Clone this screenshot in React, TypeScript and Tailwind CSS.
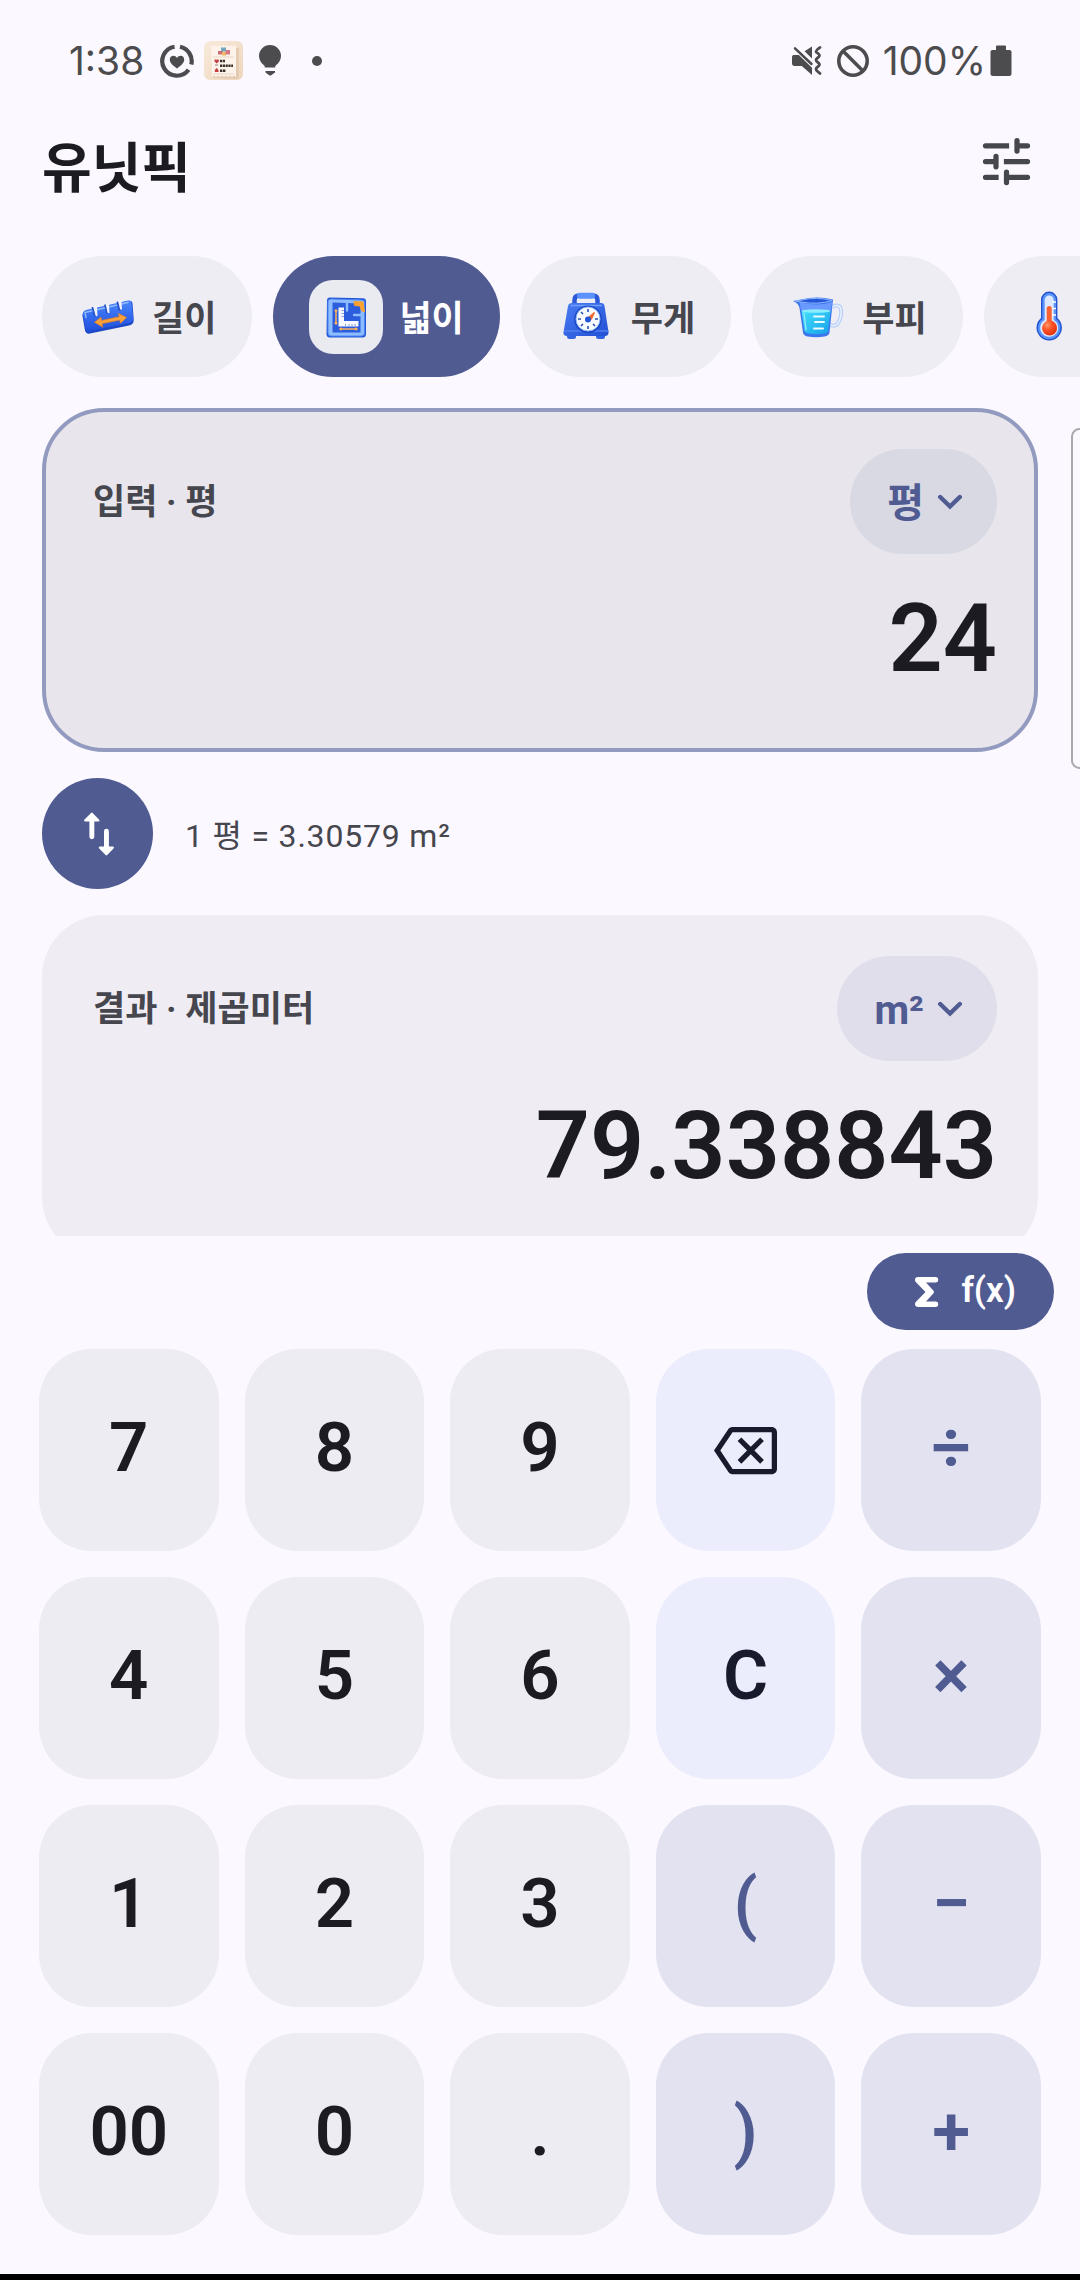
import { useState } from "react";
import type { ReactNode } from "react";
import { MdOutlineBackspace } from "react-icons/md";

function ActivityIcon() {
  return (
    <svg viewBox="0 0 34 34" className="size-[34px]" fill="none" stroke="currentColor" strokeWidth="4.2">
      <path d="M20 2.8A14.6 14.6 0 0 1 31.3 20.5" />
      <path d="M28.6 25.8A14.6 14.6 0 1 1 14.6 2.7" />
      <path
        d="M17 24.5C11.5 20.5 9.8 18.400 9.800 15.500c0-2.200 1.600-3.700 3.500-3.700 1.500 0 2.900.8 3.700 2.200.8-1.400 2.200-2.200 3.700-2.200 1.900 0 3.500 1.500 3.500 3.700 0 2.900-1.700 5-7.200 9z"
        fill="currentColor"
        stroke="none"
      />
    </svg>
  );
}

function ReceiptIcon() {
  return (
    <svg viewBox="0 0 40 40" className="size-10">
      <defs>
        <linearGradient id="receiptBack" x1="0" y1="0" x2="1" y2="1">
          <stop offset="0" stopColor="#f8eadb" />
          <stop offset="1" stopColor="#efd6bd" />
        </linearGradient>
      </defs>
      <rect width="39" height="39" rx="6" fill="url(#receiptBack)" />
      <path d="M9 6l26 1v31l-26-1z" fill="#dcbfa3" opacity=".6" />
      <path
        d="M7 4l2 1.500 2-1.500 2 1.500 2-1.500 2 1.500 2-1.500 2 1.500 2-1.500 2 1.500 2-1.500 2 1.500 3-1.500v32l-2-1.500-2 1.500-2-1.500-2 1.500-2-1.500-2 1.500-2-1.500-2 1.500-2-1.500-2 1.500-2-1.500-2 1.500z"
        fill="#fdf3ea"
      />
      <path d="M9 16h21M9 33h21" stroke="#e8d5c6" strokeWidth="1" />
      <rect x="17" y="6.500" width="5" height="4" fill="#72a7bd" />
      <rect x="14" y="10" width="5" height="3.500" fill="#ce6d78" />
      <rect x="18" y="11" width="4" height="3.500" fill="#f0bd62" />
      <rect x="21.500" y="9" width="4.500" height="4.500" fill="#d77887" />
      <path d="M10.500 18.500h1.800l.5.600.5-.6h1.500v2l-2 2-2.300-2zM12.700 27l1.800 2v2h-3.700v-2z" fill="#c63f42" />
      <path d="M11 24h3" stroke="#b9a8a0" strokeWidth="1.500" />
      <path d="M16 20h5M16 24.700h13M16 29.700h6" stroke="#3d302d" strokeWidth="2.400" strokeDasharray="2.200 .6" />
    </svg>
  );
}

function BulbIcon() {
  return (
    <svg viewBox="0 0 22 32" className="h-8 w-[22px]" fill="currentColor">
      <path d="M11 0a11 11 0 0 1 11 11c0 4-2.200 7-5 9.200-.7.600-.8 1-.8 2.300H5.800c0-1.300-.1-1.700-.8-2.300C2.200 18 0 15 0 11A11 11 0 0 1 11 0z" />
      <path d="M6.500 26h9.500v1.500L12.500 30a2 2 0 0 1-2.600 0l-3.400-2.500z" />
    </svg>
  );
}

function MuteVibrateIcon() {
  return (
    <svg viewBox="0 0 30 30" className="size-[30px]">
      <path
        d="M1.500 9h5.300L20 21.800V29L9.800 20H2.500C1 20 0 19 0 17.500v-6C0 10 .6 9 1.500 9zM12.600 5.200L20 .4v12z"
        fill="currentColor"
      />
      <path d="M3 2.300L19.500 18" stroke="currentColor" strokeWidth="2.500" strokeLinecap="round" />
      <path
        d="M28 1.500c-2 1.500-4 2.500-4 4s3.500 2 3.500 4-3.500 2.500-3.500 4.500 3.500 2.500 3.500 4.500-3.500 2.500-3.500 4.500 2 2.500 4 4.500"
        fill="none"
        stroke="currentColor"
        strokeWidth="2.800"
        strokeLinecap="round"
      />
    </svg>
  );
}

function BlockedIcon() {
  return (
    <svg viewBox="0 0 32 32" className="size-8" fill="none" stroke="currentColor" strokeWidth="3.600">
      <circle cx="16" cy="16" r="14.200" />
      <path d="M6 6l20 20" />
    </svg>
  );
}

function BatteryIcon() {
  return (
    <svg viewBox="0 0 22 32" className="h-8 w-[22px]" fill="currentColor">
      <path d="M7 .5h8q1 0 1 1V5h3.500Q21.500 5 21.500 7v21.500q0 2.500-2.500 2.500H3Q.5 31 .5 28.500V7Q.5 5 2.500 5H6V1.500q0-1 1-1z" />
    </svg>
  );
}

function TuneIcon() {
  return (
    <svg viewBox="0 0 24 24" className="size-[63px]" fill="currentColor">
      <path d="M4 5a1 1 0 0 0 0 2h9V5zM15 4a1 1 0 0 1 2 0v1h3a1 1 0 0 1 0 2h-3v1a1 1 0 0 1-2 0z" />
      <path d="M4 11a1 1 0 0 0 0 2h3v1a1 1 0 0 0 2 0v-4a1 1 0 0 0-2 0v1zM11 11h9a1 1 0 0 1 0 2h-9z" />
      <path d="M4 17a1 1 0 0 0 0 2h5v-2zM11 16a1 1 0 0 1 2 0v1h7a1 1 0 0 1 0 2h-7v1a1 1 0 0 1-2 0z" />
    </svg>
  );
}

function LengthIcon() {
  return (
    <svg viewBox="0 0 58 58" className="size-[58px]">
      <defs>
        <linearGradient id="rulerBlue" x1="0" y1="0" x2="0" y2="1">
          <stop offset="0" stopColor="#4b86ff" />
          <stop offset="1" stopColor="#1f4fdc" />
        </linearGradient>
      </defs>
      <path
        d="M8 23L50 13q4-1 4.500 2.500l1.200 16q.3 5-4.700 6L12 45.500q-4 .8-5-3L4.500 28q-.5-4 3.500-5z"
        fill="#1c49c6"
      />
      <path
        d="M8 22L50 12.500q3-.6 3.500 2.500l1.700 14.500q.3 4.500-4.200 5.500L12 43q-3.500.8-4.300-2.500L5 26.500q-.5-3.500 3-4.500z"
        fill="url(#rulerBlue)"
      />
      <path d="M7 24.500l43-10M7 24.500l1 5" fill="none" stroke="#8fb9ff" strokeWidth="1.500" strokeLinecap="round" />
      <path d="M14.500 19l2.500 9.500M27 16.500l2.500 9M39.500 13.500l2 9" stroke="#2450c8" strokeWidth="2" />
      <path
        d="M15 18l2.500 9.500q1.200 1.500 2 0l-.5-8 1-2.500zM27.500 15.500l2 9q1.200 1.500 2 0L31 17l1-2.500zM40 12.500l2 8.500q1.200 1.500 2 0l-.5-7.500 1-2.200z"
        fill="#f1f1fb"
      />
      <path
        d="M16.500 34.200l6.500-5 .5 3.200 17.700-3.700-.8-3.200 8.200 4-6.200 5.800-.7-3.200-17.700 3.600.8 3.500z"
        fill="#fba23a"
        stroke="#dd7d25"
        strokeWidth=".7"
        strokeLinejoin="round"
      />
    </svg>
  );
}

function AreaIcon() {
  return (
    <svg viewBox="0 0 58 58" className="size-[58px]">
      <path d="M13 9.500l33 .8q3 .2 3 3V46q0 3.500-3.500 3.500H13q-3.500 0-3.500-3.500l.5-33.500q0-3 3-3z" fill="#2456d6" />
      <path d="M14 11l31 1q2.500 0 2.500 2.500V45q0 3-3 3H14q-3 0-3-3V14q0-3 3-3z" fill="#8dbcff" stroke="#4c86f4" strokeWidth="1" />
      <path d="M15.500 14.500L43.500 15.500V44.500H15.500z" fill="#2b5ddd" />
      <path d="M30 15v7.500M44 27h-7" fill="none" stroke="#8dbcff" strokeWidth="2.400" strokeLinecap="round" />
      <path d="M37 13.500l9 .5 1.500 10-3-1.500-1.500-4.500-5.500-.5z" fill="#f9a22f" stroke="#f9a22f" strokeWidth="1" />
      <path d="M21.500 19.500h5.500v13.500h14.500v5.500h-20z" fill="#f7f8ff" />
      <path d="M24.500 22.500H27M24.500 25.500H27M24.500 28.500H27M28.500 36v2.500M32 36v2.500M35 36v2.500M38 36v2.500" stroke="#8aa4de" strokeWidth="1" />
      <path d="M19 22v14M17.800 23.500L19 22l1.200 1.500M17.800 34.500L19 36l1.200-1.500M23 41h17M24.500 39.700L23 41l1.500 1.300M38.500 39.700L40 41l-1.500 1.300" fill="none" stroke="#ffb35a" strokeWidth="1.500" />
    </svg>
  );
}

function WeightIcon() {
  return (
    <svg viewBox="0 0 58 58" className="size-[58px]">
      <defs>
        <linearGradient id="scaleBlue" x1="0" y1="0" x2="1" y2="1">
          <stop offset="0" stopColor="#4a7cf4" />
          <stop offset="1" stopColor="#2350d4" />
        </linearGradient>
      </defs>
      <path d="M17.500 17V12q0-4 4-4.500h15q4 .5 4 4.500v5" fill="none" stroke="#2c59d8" strokeWidth="4.500" />
      <rect x="20" y="4.800" width="18" height="6" rx="3" fill="#5b92ff" />
      <rect x="10" y="44" width="9" height="7" rx="2.500" fill="#3264df" />
      <rect x="39" y="44" width="9" height="7" rx="2.500" fill="#3264df" />
      <path d="M15 15h29q3 0 3.500 3l4 26q.2 4-3.500 4H10q-4 0-3.500-4l4.500-26q.7-3 4-3z" fill="url(#scaleBlue)" />
      <path d="M14 17.500h30.500" stroke="#6fa0ff" strokeWidth="1.500" strokeLinecap="round" />
      <path d="M7 43h44.500" stroke="#5080ef" strokeWidth="1.500" />
      <circle cx="31" cy="31.200" r="13.800" fill="#1c48c2" />
      <circle cx="31" cy="31" r="12" fill="#f8faff" stroke="#8db4ff" strokeWidth="1" />
      <path
        d="M31 21v3M31 38v3M21 31h3M38 31h3M24 24l2 2M36 36l2 2M24 38l2-2"
        stroke="#294fae"
        strokeWidth="1.600"
      />
      <path d="M31.500 29.500l6-5-3 6.500z" fill="#f36a2c" stroke="#f36a2c" strokeWidth="1.200" />
      <circle cx="31" cy="31.500" r="3" fill="#2254d5" />
    </svg>
  );
}

function VolumeIcon() {
  return (
    <svg viewBox="0 0 58 58" className="size-[58px]">
      <defs>
        <linearGradient id="cupWater" x1="0" y1="0" x2="1" y2="1">
          <stop offset="0" stopColor="#44e0ff" />
          <stop offset="1" stopColor="#159fe8" />
        </linearGradient>
      </defs>
      <path d="M44 19q8-4 9 3t-3 13q-2 4-8 2" fill="none" stroke="#b9d0fb" strokeWidth="4" />
      <path d="M44 19q8-4 9 3t-3 13q-2 4-8 2" fill="none" stroke="#e9f1ff" strokeWidth="1.500" />
      <path d="M5 13l8-1.500q16-4 32 0l-3.500 33q-.5 3-5 4-8 1.500-17 0-4-.8-4.500-4L11.500 20q-1-5-6.500-7z" fill="#3c76ed" />
      <path d="M11.500 14q17 5 32.500 0l-1 8.500H13z" fill="#6b9aff" />
      <path d="M13.500 23q15 2.500 29 0l-2.500 20q-.4 2-4 2.600-8 1.400-15.500 0-3.500-.7-4-2.600z" fill="url(#cupWater)" />
      <ellipse cx="28" cy="23" rx="14.500" ry="1.800" fill="#8beeff" />
      <path d="M7 13l7-1q14-3.500 30 .5-14 4.500-31 1.500z" fill="#2457d8" stroke="#8db6ff" strokeWidth="1" />
      <path d="M16 25l2 17" stroke="#8ceaff" strokeWidth="1.500" strokeLinecap="round" />
      <path d="M26 28.500h10M27 34h9M26 40.500h9" stroke="#e9fbff" strokeWidth="2" strokeLinecap="round" />
    </svg>
  );
}

function TemperatureIcon() {
  return (
    <svg viewBox="0 0 58 58" className="size-[58px]">
      <defs>
        <radialGradient id="thermoBulb" cx=".35" cy=".3" r=".8">
          <stop offset="0" stopColor="#ff9a6a" />
          <stop offset=".4" stopColor="#ff5426" />
          <stop offset="1" stopColor="#dd2c0c" />
        </radialGradient>
      </defs>
      <path d="M29.200 3.500a8.200 8.200 0 0 1 8.200 8.200V30a12.700 12.700 0 1 1-16.400 0V11.700a8.200 8.200 0 0 1 8.200-8.200z" fill="#2353cf" />
      <path d="M29.200 5a6.800 6.800 0 0 1 6.800 6.800V31a11.200 11.200 0 1 1-13.600 0V11.800A6.800 6.800 0 0 1 29.200 5z" fill="#5a93fb" />
      <path d="M29.200 7.500a4.500 4.500 0 0 1 4.500 4.500v20a9 9 0 1 1-9 0V12a4.500 4.500 0 0 1 4.500-4.500z" fill="#dce8ff" />
      <rect x="26.700" y="18" width="5" height="20" rx="2.500" fill="#f9602f" />
      <circle cx="29.600" cy="40" r="7.500" fill="url(#thermoBulb)" />
      <path d="M32 14h4M32 20.500h4M32 27h4" stroke="#fff" strokeWidth="1.600" />
    </svg>
  );
}

function SwapIcon() {
  return (
    <svg viewBox="0 0 32 44" className="h-11 w-8" fill="currentColor">
      <path d="M9 1q.8-.8 1.600 0l6.400 6.600q1.300 1.900-.8 1.900h-3.900v15.300a2.400 2.400 0 0 1-4.900 0V9.500H3.300q-2 0-.8-1.900z" />
      <path d="M23.600 43q.8.8 1.600 0l6.300-6.600q1.300-1.900-.8-1.900h-3.800V19.200a2.400 2.400 0 0 0-4.900 0v15.300h-4q-2 0-.8 1.900z" />
    </svg>
  );
}

function ChevronIcon() {
  return (
    <svg
      viewBox="0 0 26 16"
      className="pointer-events-none absolute right-[34px] top-[45px] h-4 w-[26px]"
      fill="none"
      stroke="currentColor"
      strokeWidth="4.400"
      strokeLinecap="round"
    >
      <path d="M3.200 3L13 12.500 22.800 3" />
    </svg>
  );
}

function SigmaIcon() {
  return (
    <svg viewBox="0 0 24 32" className="h-8 w-6" fill="currentColor">
      <path d="M3 1h17.500a2.700 2.700 0 0 1 0 5.400H11l7.500 8.300q1 1.300 0 2.600L11 25.600h9.500a2.700 2.700 0 0 1 0 5.400H3.500q-3.500 0-3.500-3 0-1.200 1-2.300L10.500 16 1 6.300Q0 5.200 0 4q0-3 3-3z" />
    </svg>
  );
}

const categories: { name: string; icon: ReactNode }[] = [
  { name: "길이", icon: <LengthIcon /> },
  { name: "넓이", icon: <AreaIcon /> },
  { name: "무게", icon: <WeightIcon /> },
  { name: "부피", icon: <VolumeIcon /> },
  { name: "온도", icon: <TemperatureIcon /> },
];

type KeyKind = "digit" | "edit" | "operator";

const keyStyles: Record<KeyKind, string> = {
  digit: "bg-[#edecf2] text-[#1b1b21]",
  edit: "bg-[#ebedfd] text-[#171b2c]",
  operator: "bg-[#e2e2f0] text-[#505b92]",
};

const keys: { label: string; kind: KeyKind }[] = [
  { label: "7", kind: "digit" },
  { label: "8", kind: "digit" },
  { label: "9", kind: "digit" },
  { label: "backspace", kind: "edit" },
  { label: "÷", kind: "operator" },
  { label: "4", kind: "digit" },
  { label: "5", kind: "digit" },
  { label: "6", kind: "digit" },
  { label: "C", kind: "edit" },
  { label: "×", kind: "operator" },
  { label: "1", kind: "digit" },
  { label: "2", kind: "digit" },
  { label: "3", kind: "digit" },
  { label: "(", kind: "operator" },
  { label: "−", kind: "operator" },
  { label: "00", kind: "digit" },
  { label: "0", kind: "digit" },
  { label: ".", kind: "digit" },
  { label: ")", kind: "operator" },
  { label: "+", kind: "operator" },
];

function UnitSelect({ unit, label, tone }: { unit: string; label: string; tone: string }) {
  return (
    <div className="relative text-[#505b92]">
      <select
        aria-label={label}
        className={`field-sizing-content block h-[105px] appearance-none rounded-full pl-[37px] pr-[73px] pt-1 text-[40px] font-bold ${tone}`}
      >
        <option>{unit}</option>
      </select>
      <ChevronIcon />
    </div>
  );
}

export default function App() {
  const [selected, setSelected] = useState("넓이");
  const [amount, setAmount] = useState("24");

  return (
    <div className="flex h-screen w-full flex-col overflow-hidden bg-[#fbf8ff] font-['Roboto','Noto_Sans_CJK_KR',sans-serif] text-[#1b1b21]">
      <div className="flex h-[122px] shrink-0 items-center justify-between pl-[69px] pr-[68px] font-['Inter',sans-serif] text-[39px] text-[#4c4c4e]">
        <div className="flex items-center">
          <span>1:38</span>
          <div className="ml-4 flex items-center gap-[10px]">
            <ActivityIcon />
            <ReceiptIcon />
          </div>
          <div className="ml-[15px] flex items-center gap-[31px]">
            <BulbIcon />
            <span className="size-[10px] rounded-full bg-current" />
          </div>
        </div>
        <div className="flex items-center">
          <MuteVibrateIcon />
          <div className="ml-[15px] mr-[14px]">
            <BlockedIcon />
          </div>
          <span>100%</span>
          <div className="ml-1">
            <BatteryIcon />
          </div>
        </div>
      </div>

      <header className="flex h-[90px] shrink-0 items-start justify-between px-[42px]">
        <h1 className="text-[54px] font-bold leading-[96px]">유닛픽</h1>
        <button type="button" aria-label="설정" className="mt-2 text-[#46464f]">
          <TuneIcon />
        </button>
      </header>

      <nav className="mt-11 flex shrink-0 gap-[21px] overflow-x-auto pl-[42px] [scrollbar-width:none]">
        {categories.map(({ name, icon }) => {
          const active = name === selected;
          return (
            <button
              key={name}
              type="button"
              aria-pressed={active}
              onClick={() => setSelected(name)}
              className={`flex h-[121px] shrink-0 items-center gap-4 rounded-full px-9 text-[35px] font-bold ${
                active ? "bg-[#505b92] text-white" : "bg-[#eeedf3] text-[#46464f]"
              }`}
            >
              <span className={active ? "rounded-3xl bg-[#e9ebf1] p-2" : ""}>{icon}</span>
              <span className="pt-2">{name}</span>
            </button>
          );
        })}
      </nav>

      <main className="relative min-h-0 flex-1 overflow-hidden px-[42px] pt-[31px]">
        <section className="rounded-[62px] border-4 border-[#939abf] bg-[#e8e6ec] pb-[53px] pl-[47px] pr-[37px] pt-[37px]">
          <div className="flex items-center justify-between">
            <label htmlFor="amount" className="pt-1 text-[35px] font-bold text-[#46464f]">
              입력 · 평
            </label>
            <UnitSelect unit="평" label="입력 단위" tone="bg-[#d9d9e4]" />
          </div>
          <input
            id="amount"
            value={amount}
            onChange={(event) => setAmount(event.target.value)}
            inputMode="decimal"
            className="mt-[29px] block h-28 w-full bg-transparent text-right text-[95px] font-semibold leading-[112px] outline-none"
          />
        </section>

        <div className="absolute -right-2 top-[51px] h-[341px] w-[17px] rounded-xl border-2 border-[#aaaaad]" />

        <div className="my-[26px] flex items-center gap-8">
          <button
            type="button"
            aria-label="단위 바꾸기"
            className="flex size-[111px] items-center justify-center rounded-full bg-[#505b92] text-white"
          >
            <SwapIcon />
          </button>
          <p className="pt-1 text-[32px] tracking-wide text-[#46464f]">1 평 = 3.30579 m²</p>
        </div>

        <section className="rounded-[62px] bg-[#efedf3] pb-[57px] pl-[51px] pr-[41px] pt-[41px]">
          <div className="flex items-center justify-between">
            <label htmlFor="result" className="pt-1 text-[35px] font-bold text-[#46464f]">
              결과 · 제곱미터
            </label>
            <UnitSelect unit="m²" label="결과 단위" tone="bg-[#e0deea]" />
          </div>
          <output id="result" className="mt-[29px] block text-right text-[95px] font-semibold leading-[112px]">
            79.338843
          </output>
        </section>
      </main>

      <div className="flex shrink-0 justify-end pb-[19px] pr-[26px] pt-[17px]">
        <button
          type="button"
          className="flex h-[77px] items-center gap-[22px] rounded-full bg-[#505b92] pl-12 pr-[38px] text-[35px] font-semibold text-white"
        >
          <SigmaIcon />
          f(x)
        </button>
      </div>

      <div className="grid shrink-0 grid-cols-5 gap-[26px] px-[39px] pb-[39px]">
        {keys.map(({ label, kind }) => (
          <button
            key={label}
            type="button"
            aria-label={label === "backspace" ? "지우기" : undefined}
            className={`flex h-[202px] items-center justify-center rounded-[53px] text-[69px] font-semibold ${keyStyles[kind]}`}
          >
            {label === "backspace" ? (
              <MdOutlineBackspace className="size-[63px]" />
            ) : (
              <span className="pb-1">{label}</span>
            )}
          </button>
        ))}
      </div>
      <div className="h-[6px] shrink-0 bg-black" />
    </div>
  );
}
